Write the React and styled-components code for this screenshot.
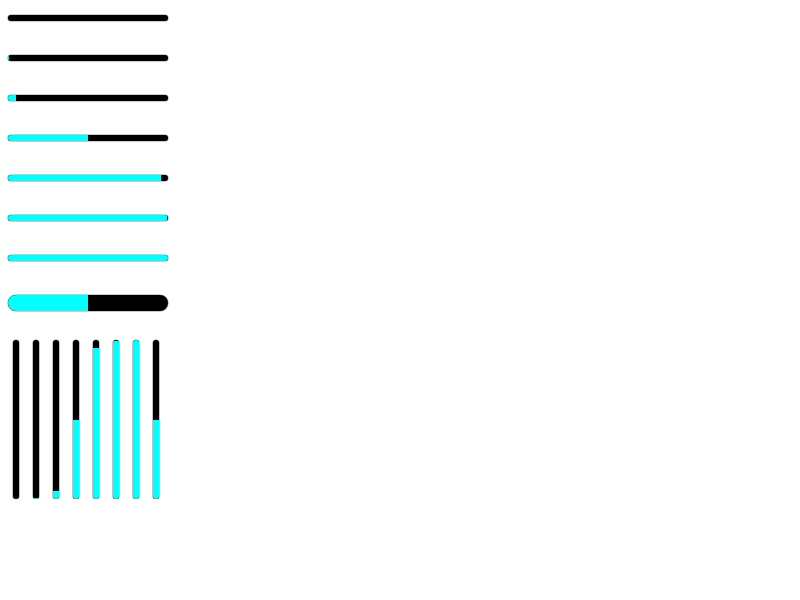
import React from "react";
import styled, { createGlobalStyle } from "styled-components";

const Global = createGlobalStyle`
  html, body { margin: 0; padding: 0; background: #fff; }
  body { font-family: "Liberation Sans", Arial, sans-serif; }
`;

const Page = styled.div`
  padding: 15px 0 0 8px;
  display: flex;
  flex-direction: column;
`;

const HList = styled.div`
  display: flex;
  flex-direction: column;
  gap: 34px;
`;

const HTrack = styled.div`
  position: relative;
  width: 160px;
  height: ${(p) => p.$h}px;
  background: #000;
  border-radius: ${(p) => p.$r}px;
  box-shadow: 0 0 0 0.6px #9a9a9a;
  overflow: hidden;
`;

const HFill = styled.div`
  height: 100%;
  background: #00ffff;
`;

const BigWrap = styled.div`
  margin-top: 34px;
`;

const VList = styled.div`
  margin-top: 29px;
  margin-left: 5px;
  display: flex;
  gap: 14px;
`;

const VTrack = styled.div`
  position: relative;
  width: 6px;
  height: 159px;
  background: #000;
  border-radius: 3px;
  box-shadow: 0 0 0 0.6px #9a9a9a;
  overflow: hidden;
  display: flex;
  flex-direction: column;
  justify-content: flex-end;
`;

const VFill = styled.div`
  width: 100%;
  background: #00ffff;
`;

const hValues = [0, 0.6, 5, 50, 95.5, 99.4, 100];
const vValues = [0, 0.6, 5, 50, 95, 99.4, 100, 50];

export default function App() {
  return (
    <>
      <Global />
      <Page>
        <HList>
          {hValues.map((v, i) => (
            <HTrack key={i} $h={6} $r={3}>
              <HFill style={{ width: `${v}%` }} />
            </HTrack>
          ))}
        </HList>
        <BigWrap>
          <HTrack $h={16} $r={8}>
            <HFill style={{ width: "50%" }} />
          </HTrack>
        </BigWrap>
        <VList>
          {vValues.map((v, i) => (
            <VTrack key={i}>
              <VFill style={{ height: `${v}%` }} />
            </VTrack>
          ))}
        </VList>
      </Page>
    </>
  );
}
